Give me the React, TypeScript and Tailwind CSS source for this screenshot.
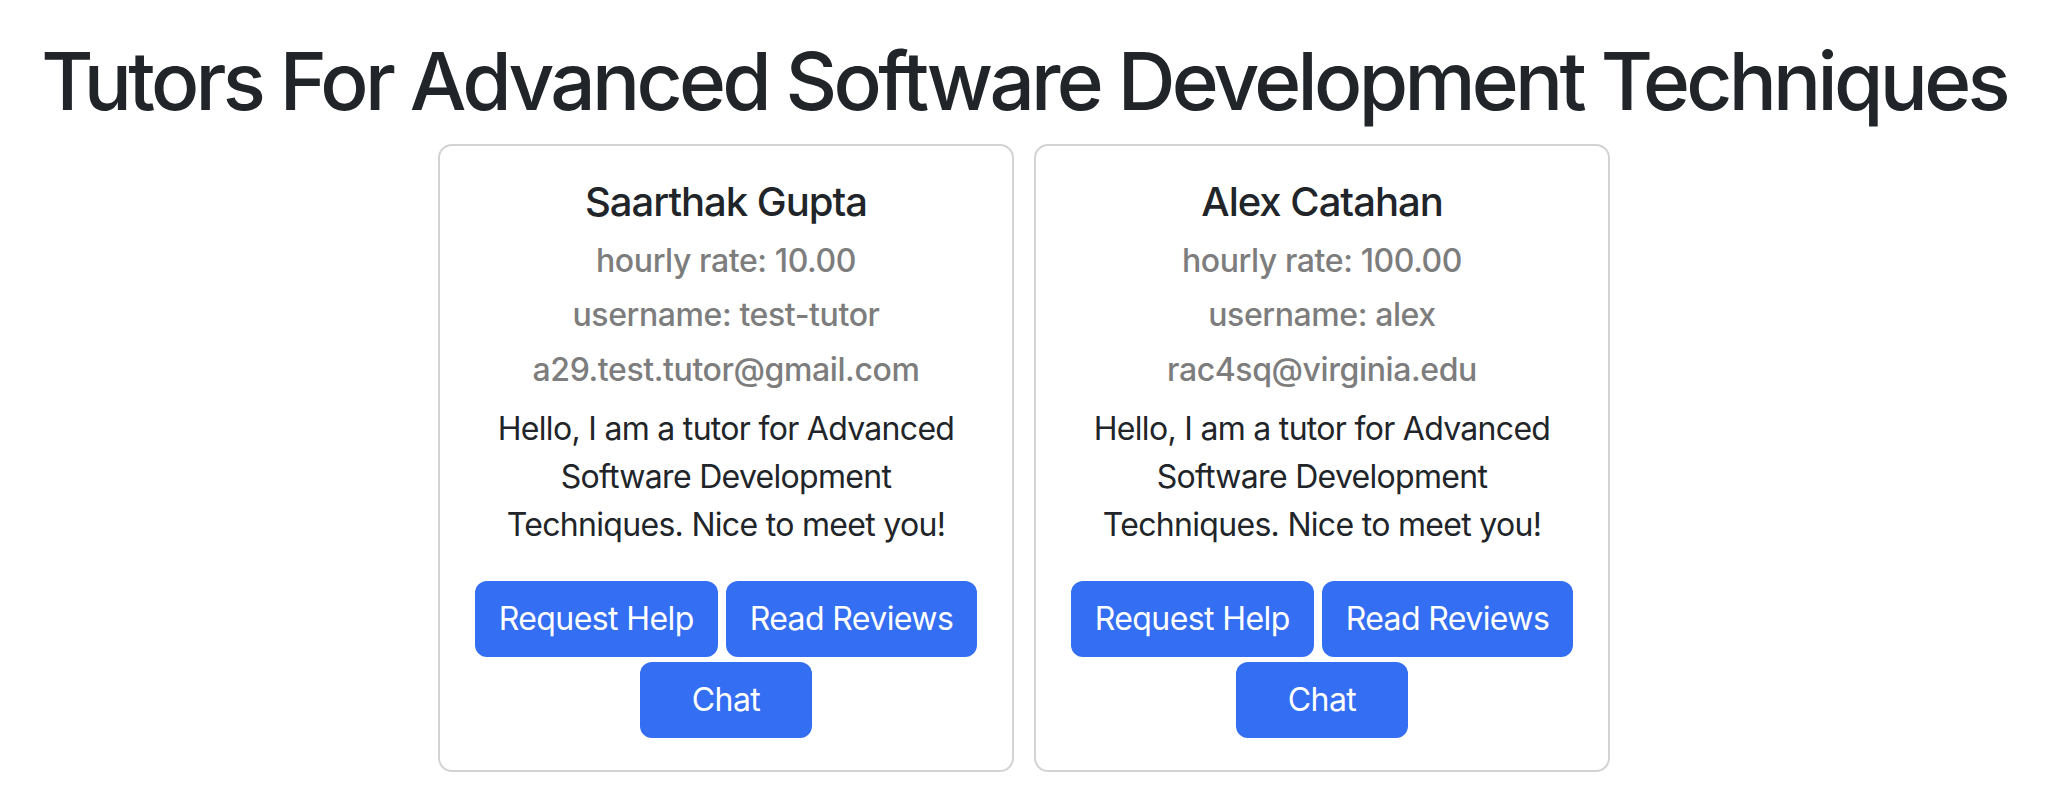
const tutors = [
  {
    name: "Saarthak Gupta",
    rate: "10.00",
    username: "test-tutor",
    email: "a29.test.tutor@gmail.com",
  },
  {
    name: "Alex Catahan",
    rate: "100.00",
    username: "alex",
    email: "rac4sq@virginia.edu",
  },
];

const btn =
  "h-[76px] rounded-[12px] bg-[#336ef3] px-[24px] text-[32px] leading-[48px] tracking-[-0.6px] text-white";

const sub =
  "mb-[16px] text-[32px] font-medium leading-[38.4px] tracking-[-0.4px] text-[#7d7d7d]";

function TutorCard({ tutor }: { tutor: (typeof tutors)[number] }) {
  return (
    <div className="w-[576px] rounded-[14px] border-2 border-[#d3d3d3] bg-white p-[32px] text-center">
      <h5 className="mb-[16px] text-[40px] font-medium leading-[48px] tracking-[-1px] text-[#212529]">
        {tutor.name}
      </h5>
      <h6 className={sub}>hourly rate: {tutor.rate}</h6>
      <h6 className={sub}>username: {tutor.username}</h6>
      <h6 className={sub}>{tutor.email}</h6>
      <p className="mb-[32px] text-[32px] leading-[48px] tracking-[-0.7px] text-[#212529]">
        Hello, I am a tutor for Advanced Software Development Techniques. Nice
        to meet you!
      </p>
      <div className="flex flex-wrap justify-center gap-x-[8px] gap-y-[5px]">
        <button type="button" className={btn}>
          Request Help
        </button>
        <button type="button" className={btn}>
          Read Reviews
        </button>
        <button type="button" className={`${btn} w-[172px]`}>
          Chat
        </button>
      </div>
    </div>
  );
}

export default function App() {
  return (
    <div className="flex min-h-screen w-full flex-col items-center bg-white pr-[16px] pt-[33px] font-['Inter','Liberation_Sans',sans-serif]">
      <h1 className="mb-[15px] whitespace-nowrap text-[80px] font-medium leading-[96px] tracking-[-3.7px] text-[#212529]">
        Tutors For Advanced Software Development Techniques
      </h1>
      <div className="flex gap-[20px]">
        {tutors.map((t) => (
          <TutorCard key={t.username} tutor={t} />
        ))}
      </div>
    </div>
  );
}
